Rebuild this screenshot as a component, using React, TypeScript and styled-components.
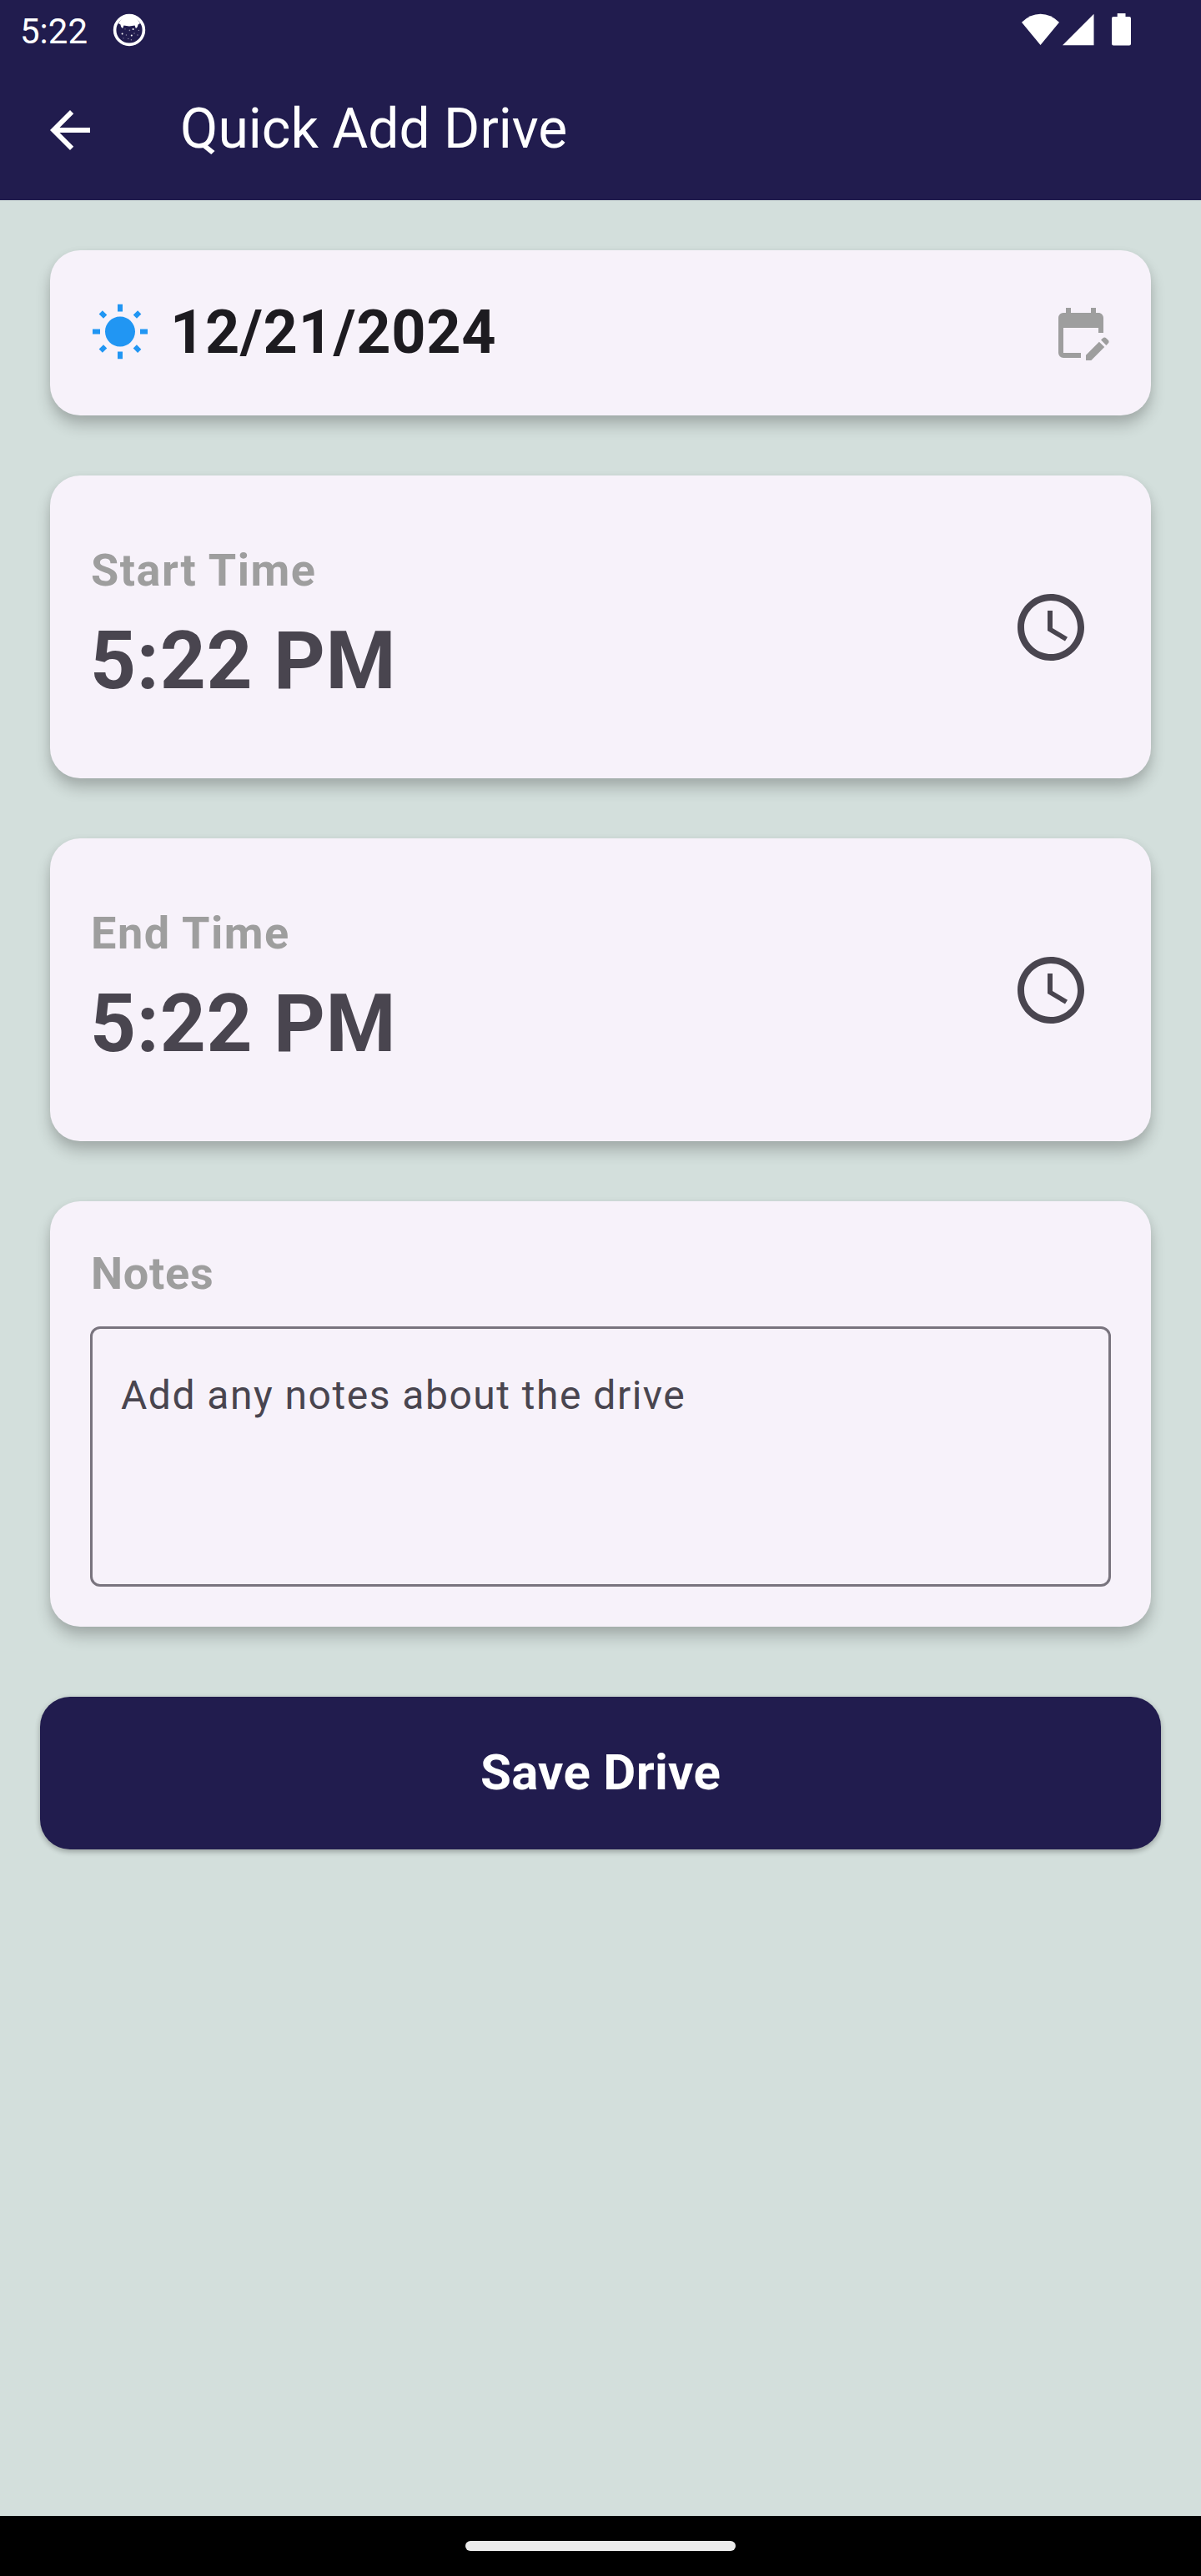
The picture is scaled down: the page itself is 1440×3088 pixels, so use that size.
import React from "react";
import styled, { createGlobalStyle } from "styled-components";
import { MdAccessTime, MdArrowBack, MdEditCalendar, MdWbSunny } from "react-icons/md";

const GlobalStyle = createGlobalStyle`
  *, *::before, *::after { box-sizing: border-box; }
  body { margin: 0; background: #d3dfdc; }
`;

const Screen = styled.div`
  display: flex;
  flex-direction: column;
  width: 1440px;
  height: 3088px;
  background: #d3dfdc;
  font-family: Roboto, "Liberation Sans", sans-serif;
`;

const StatusBar = styled.div`
  display: flex;
  align-items: center;
  justify-content: space-between;
  height: 72px;
  padding: 0 84px 0 24px;
  background: #211c4e;
  color: #fff;
`;

const StatusGroup = styled.div`
  display: flex;
  align-items: center;
`;

const StatusTime = styled.span`
  padding-top: 3px;
  margin-right: 30px;
  font-size: 42px;
  line-height: 48px;
`;

const Toolbar = styled.header`
  display: flex;
  align-items: center;
  gap: 96px;
  height: 168px;
  padding: 0 48px;
  background: #211c4e;
  color: #fff;
`;

const BackButton = styled.button`
  display: flex;
  padding: 0;
  border: 0;
  background: none;
  color: inherit;
`;

const Title = styled.h1`
  margin: 0;
  padding-bottom: 3px;
  font-size: 66px;
  font-weight: 400;
  line-height: 84px;
`;

const Content = styled.main`
  flex: 1;
  display: flex;
  flex-direction: column;
  gap: 72px;
  padding: 60px 60px 0;
`;

const Card = styled.section`
  border-radius: 36px;
  background: #f7f2fa;
  box-shadow: 0 12px 18px rgba(0, 0, 0, 0.2), 0 3px 12px rgba(0, 0, 0, 0.06);
`;

const DateCard = styled(Card)`
  display: flex;
  align-items: center;
  height: 198px;
  padding: 0 48px;
`;

const DateText = styled.span`
  flex: 1;
  margin-left: 24px;
  color: #1d1b20;
  font-size: 72px;
  font-weight: 700;
  line-height: 96px;
  letter-spacing: 0.75px;
`;

const TimeCard = styled(Card)`
  display: flex;
  justify-content: space-between;
  align-items: flex-start;
  height: 363px;
  padding: 75px 72px 0 48px;
`;

const Label = styled.div<{ $spacing?: number }>`
  padding-left: 1px;
  color: #9e9e9e;
  font-size: 54px;
  font-weight: 700;
  line-height: 78px;
  letter-spacing: ${({ $spacing = 1.5 }) => $spacing}px;
`;

const TimeText = styled.div`
  color: #49454f;
  font-size: 96px;
  font-weight: 700;
  line-height: 138px;
  letter-spacing: 0.75px;
`;

const ClockButton = styled.button`
  display: flex;
  margin-top: 59px;
  padding: 0;
  border: 0;
  background: none;
  color: #49454f;
`;

const NotesCard = styled(Card)`
  display: flex;
  flex-direction: column;
  gap: 24px;
  padding: 48px;
`;

const NotesField = styled.textarea`
  display: block;
  width: 100%;
  height: 312px;
  padding: 44px 34px;
  border: 3px solid #79747e;
  border-radius: 12px;
  outline: none;
  resize: none;
  overflow: hidden;
  background: transparent;
  color: #49454f;
  font-family: inherit;
  font-size: 48px;
  line-height: 72px;
  letter-spacing: 1.5px;

  &::placeholder {
    color: #49454f;
    opacity: 1;
  }
`;

const SaveButton = styled.button`
  height: 183px;
  margin: 12px -12px 0;
  padding: 0 0 2px;
  border: 0;
  border-radius: 36px;
  background: #211c4e;
  box-shadow: 0 3px 6px rgba(0, 0, 0, 0.24), 0 1px 9px rgba(0, 0, 0, 0.05);
  color: #fff;
  font-family: inherit;
  font-size: 60px;
  font-weight: 700;
  letter-spacing: 0.3px;
`;

const NavigationBar = styled.div`
  display: flex;
  align-items: center;
  justify-content: center;
  height: 72px;
  background: #000;
`;

const HomeHandle = styled.div`
  width: 324px;
  height: 12px;
  border-radius: 6px;
  background: #ebebeb;
`;

const MascotIcon = () => (
  <svg width="40" height="40" viewBox="0 0 40 40" fill="none">
    <circle cx="20" cy="20" r="17.4" stroke="#fff" strokeWidth="3.6" />
    <path
      d="M7 12 Q12 3 20 3 Q28 3 33 12 L30.5 13.5 Q30 17.5 27.7 17.8 L26.6 14.6 Q20 16.2 13.4 14.6 L12.3 17.8 Q10 17.5 9.5 13.5 Z"
      fill="#fff"
    />
    <g fill="#fff">
      <circle cx="11.6" cy="24.6" r="1" />
      <circle cx="22.8" cy="26.6" r="1" />
      <circle cx="24.6" cy="19" r="1" />
      <g opacity="0.5">
        <circle cx="20.4" cy="20.4" r="0.8" />
        <circle cx="15" cy="18.8" r="0.6" />
        <circle cx="16.4" cy="26" r="0.7" />
        <circle cx="26" cy="24" r="0.7" />
        <circle cx="30" cy="26" r="0.7" />
        <circle cx="31.4" cy="20.4" r="0.7" />
        <circle cx="18.8" cy="30.4" r="0.7" />
        <circle cx="22.4" cy="31.8" r="0.7" />
        <circle cx="13" cy="29.8" r="0.6" />
      </g>
    </g>
  </svg>
);

const SystemIcons = () => (
  <svg width="132" height="40" viewBox="1224 16 132 40" fill="#fff">
    <path d="M1247.5 54 L1225 26.8 Q1235 16.8 1247.5 16.8 Q1260 16.8 1270 26.8 Z" />
    <path d="M1274 54.3 L1311.5 16.8 V54.3 Z" />
    <path d="M1339.7 20 V16 H1349.5 V20 H1354 Q1356 20 1356 22 V52.5 Q1356 54.5 1354 54.5 H1335 Q1333 54.5 1333 52.5 V22 Q1333 20 1335 20 Z" />
  </svg>
);

type TimeFieldProps = { label: string; value: string };

const TimeField = ({ label, value }: TimeFieldProps) => (
  <TimeCard>
    <div>
      <Label>{label}</Label>
      <TimeText>{value}</TimeText>
    </div>
    <ClockButton aria-label={label}>
      <MdAccessTime size={96} />
    </ClockButton>
  </TimeCard>
);

export default function App() {
  return (
    <Screen>
      <GlobalStyle />
      <StatusBar>
        <StatusGroup>
          <StatusTime>5:22</StatusTime>
          <MascotIcon />
        </StatusGroup>
        <SystemIcons />
      </StatusBar>
      <Toolbar>
        <BackButton aria-label="Back">
          <MdArrowBack size={72} />
        </BackButton>
        <Title>Quick Add Drive</Title>
      </Toolbar>
      <Content>
        <DateCard>
          <MdWbSunny size={72} color="#2196f3" />
          <DateText>12/21/2024</DateText>
          <MdEditCalendar size={72} color="#9e9e9e" />
        </DateCard>
        <TimeField label="Start Time" value="5:22 PM" />
        <TimeField label="End Time" value="5:22 PM" />
        <NotesCard>
          <Label $spacing={0.75}>Notes</Label>
          <NotesField placeholder="Add any notes about the drive" />
        </NotesCard>
        <SaveButton>Save Drive</SaveButton>
      </Content>
      <NavigationBar>
        <HomeHandle />
      </NavigationBar>
    </Screen>
  );
}
